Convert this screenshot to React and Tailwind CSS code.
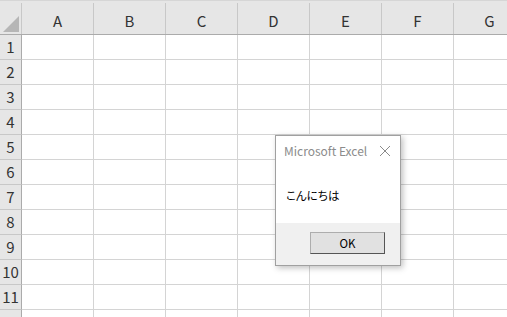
import React from 'react';

const columns = ['A', 'B', 'C', 'D', 'E', 'F', 'G'];
const rows = [1, 2, 3, 4, 5, 6, 7, 8, 9, 10, 11, ''];

const font = { fontFamily: '"Noto Sans CJK JP", "Noto Sans", sans-serif' };

function HeaderRow() {
    return (
        <div className="flex h-[32px] shrink-0 bg-[#e6e6e6] border-b border-[#ababab]">
            <div className="relative w-[22px] shrink-0 border-r border-[#c8c8c8]">
                <svg className="absolute right-[2px] bottom-[2px]" width="16" height="16" viewBox="0 0 16 16">
                    <polygon points="16,0 16,16 0,16" fill="#b6b6b6" />
                </svg>
            </div>
            {columns.map((c) => (
                <div
                    key={c}
                    className="w-[72px] shrink-0 flex items-center justify-center pt-[5px] text-[15px] text-[#333] border-r border-[#c8c8c8]"
                >
                    {c}
                </div>
            ))}
        </div>
    );
}

function GridRow({ n }) {
    return (
        <div className="flex h-[25px] shrink-0">
            <div className="w-[22px] shrink-0 bg-[#e6e6e6] border-r border-b border-[#ababab] border-b-[#c8c8c8] flex items-center justify-center text-[15px] text-[#333]">
                {n}
            </div>
            {columns.map((c) => (
                <div key={c} className="w-[72px] shrink-0 bg-white border-r border-b border-[#d4d4d4]" />
            ))}
        </div>
    );
}

function MessageBox() {
    return (
        <div className="absolute left-[275px] top-[135px] w-[126px] h-[131px] bg-white border border-[#a0a0a0] shadow-[2px_2px_6px_rgba(0,0,0,0.25)] flex flex-col">
            <div className="flex items-center justify-between h-[30px] pl-[8px] pr-[9px]">
                <span className="text-[12px] text-[#8c8c8c]">Microsoft Excel</span>
                <svg width="12" height="12" viewBox="0 0 12 12">
                    <path d="M1 1 L11 11 M11 1 L1 11" stroke="#8a8a8a" strokeWidth="1" fill="none" />
                </svg>
            </div>
            <div className="flex-1 flex items-center pl-[10px] pt-[2px] text-[11.5px] text-black [font-feature-settings:'palt']">
                こんにちは
            </div>
            <div className="h-[42px] bg-[#f0f0f0] flex items-start justify-end pt-[9px] pr-[15px]">
                <button className="w-[75px] h-[22px] bg-[#e1e1e1] border border-[#adadad] border-r-[#555] border-b-[#555] text-[11.5px] text-black flex items-center justify-center pt-[1px]">
                    OK
                </button>
            </div>
        </div>
    );
}

export default function App() {
    return (
        <div className="relative w-[507px] h-[317px] overflow-hidden bg-white" style={font}>
            <div className="h-[1px] bg-[#d6d6d6]" />
            <div className="h-[2px] bg-[#e6e6e6]" />
            <div className="flex flex-col">
                <HeaderRow />
                {rows.map((n, i) => (
                    <GridRow key={i} n={n} />
                ))}
            </div>
            <MessageBox />
        </div>
    );
}
